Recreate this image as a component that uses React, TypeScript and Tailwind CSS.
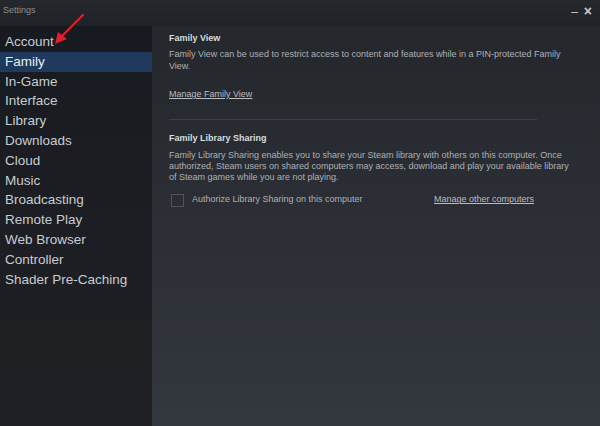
const menu = [
  "Account",
  "Family",
  "In-Game",
  "Interface",
  "Library",
  "Downloads",
  "Cloud",
  "Music",
  "Broadcasting",
  "Remote Play",
  "Web Browser",
  "Controller",
  "Shader Pre-Caching",
]

export default function App() {
  return (
    <div className="relative w-[600px] h-[426px] overflow-hidden flex flex-col bg-[#1e2025] font-['Liberation_Sans',Arial,sans-serif]">
      {/* title bar */}
      <div className="h-[26px] flex items-start justify-between bg-gradient-to-b from-[#25282d] to-[#1f2226]">
        <span className="pl-[3px] pt-[4px] text-[9px] text-[#8b8e93]">Settings</span>
        <div className="flex items-start gap-[6px] pr-[8px] pt-[4px] text-[#c9cbce]">
          <span className="text-[12px] leading-[14px] mt-[1px]">–</span>
          <span className="text-[14px] leading-[14px] font-bold">×</span>
        </div>
      </div>

      <div className="flex flex-1">
        {/* sidebar */}
        <nav className="w-[152px] pt-[6px] bg-gradient-to-b from-[#171a20] via-[#1c1e23] to-[#1e2024]">
          {menu.map((item) => (
            <div
              key={item}
              className={
                item === "Family"
                  ? "h-[19.8px] pl-[5px] text-[13.5px] leading-[19.8px] text-[#e6eef5] bg-[#1f3a5d]"
                  : "h-[19.8px] pl-[5px] text-[13.5px] leading-[19.8px] text-[#c8ccd0]"
              }
            >
              {item}
            </div>
          ))}
        </nav>

        {/* content */}
        <main className="flex-1 pl-[17px] pt-[6px] bg-gradient-to-b from-[#24272c] to-[#33373e]">
          <div className="w-[396px]">
            <h2 className="text-[9px] leading-[12px] font-bold text-[#d9dbdd]">Family View</h2>
            <p className="mt-[4px] text-[9px] leading-[12px] text-[#adb1b5]">
              Family View can be used to restrict access to content and features while in a PIN-protected Family
              View.
            </p>
            <a className="block mt-[16px] text-[9px] leading-[12px] text-[#b9bcc0] underline">
              Manage Family View
            </a>
          </div>

          <div className="mt-[19px] w-[368px] h-px bg-[#3c4047]" />

          <div className="w-[406px]">
            <h2 className="mt-[12px] text-[9px] leading-[12px] font-bold text-[#d9dbdd]">
              Family Library Sharing
            </h2>
            <p className="mt-[6px] text-[9px] leading-[11.2px] text-[#adb1b5]">
              Family Library Sharing enables you to share your Steam library with others on this computer. Once
              authorized, Steam users on shared computers may access, download and play your available library
              of Steam games while you are not playing.
            </p>
            <div className="mt-[10px] flex items-center h-[13px]">
              <span className="ml-[2px] w-[13px] h-[13px] border border-[#50545a]" />
              <span className="ml-[8px] w-[242px] text-[9px] text-[#adb1b5]">
                Authorize Library Sharing on this computer
              </span>
              <a className="text-[9px] text-[#b9bcc0] underline">Manage other computers</a>
            </div>
          </div>
        </main>
      </div>

      {/* red annotation arrow */}
      <svg className="absolute left-0 top-0" width="600" height="426" viewBox="0 0 600 426">
        <line x1="83" y1="15" x2="62" y2="36" stroke="#e0202a" strokeWidth="2.2" strokeLinecap="round" />
        <polygon points="55,44 58,32 67,39" fill="#e0202a" />
      </svg>
    </div>
  )
}
